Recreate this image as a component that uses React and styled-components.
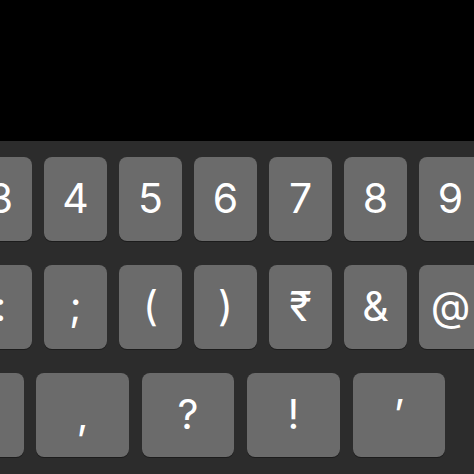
import React from "react";
import styled, { createGlobalStyle } from "styled-components";

const GlobalStyle = createGlobalStyle`
  html, body {
    margin: 0;
    padding: 0;
    background: #000;
    width: 474px;
    height: 474px;
    overflow: hidden;
  }
`;

const rows = [
  { offset: -31, width: 63, gap: 12, keys: ["3", "4", "5", "6", "7", "8", "9"] },
  { offset: -31, width: 63, gap: 12, keys: [":", ";", "(", ")", "₹", "&", "@"] },
  { offset: -69, width: 92.7, gap: 12.7, keys: [".", ",", "?", "!", "’"] },
];

const App = () => {
  return (
    <>
      <GlobalStyle />
      <Screen>
        <TopArea />
        <Keyboard>
          {rows.map((row, i) => (
            <Row key={i} $offset={row.offset} $gap={row.gap}>
              {row.keys.map((k) => (
                <Key key={k} $width={row.width}>
                  {k}
                </Key>
              ))}
              {row.width > 70 && <Key $width={row.width} $lead />}
            </Row>
          ))}
        </Keyboard>
      </Screen>
    </>
  );
};

const Screen = styled.div`
  width: 474px;
  height: 474px;
  display: flex;
  flex-direction: column;
  overflow: hidden;
  font-family: Inter, "Noto Sans", "DejaVu Sans", sans-serif;
`;

const TopArea = styled.div`
  height: 141px;
  background: #000;
  flex: none;
`;

const Keyboard = styled.div`
  flex: 1;
  background: #2c2c2c;
  padding-top: 16px;
  display: flex;
  flex-direction: column;
  gap: 24px;
  overflow: hidden;
`;

const Row = styled.div`
  display: flex;
  gap: ${(p) => p.$gap}px;
  margin-left: ${(p) => p.$offset}px;
  height: 84px;
`;

const Key = styled.div`
  flex: none;
  width: ${(p) => p.$width}px;
  height: 84px;
  margin-left: ${(p) => (p.$lead ? 16 : 0)}px;
  box-sizing: border-box;
  background: #6b6b6b;
  border-radius: 8px;
  box-shadow: 0 1px 0 #1c1c1c;
  color: #fff;
  font-size: 41px;
  line-height: 1;
  display: flex;
  align-items: center;
  justify-content: center;
  padding-bottom: 2px;
`;

export default App;
